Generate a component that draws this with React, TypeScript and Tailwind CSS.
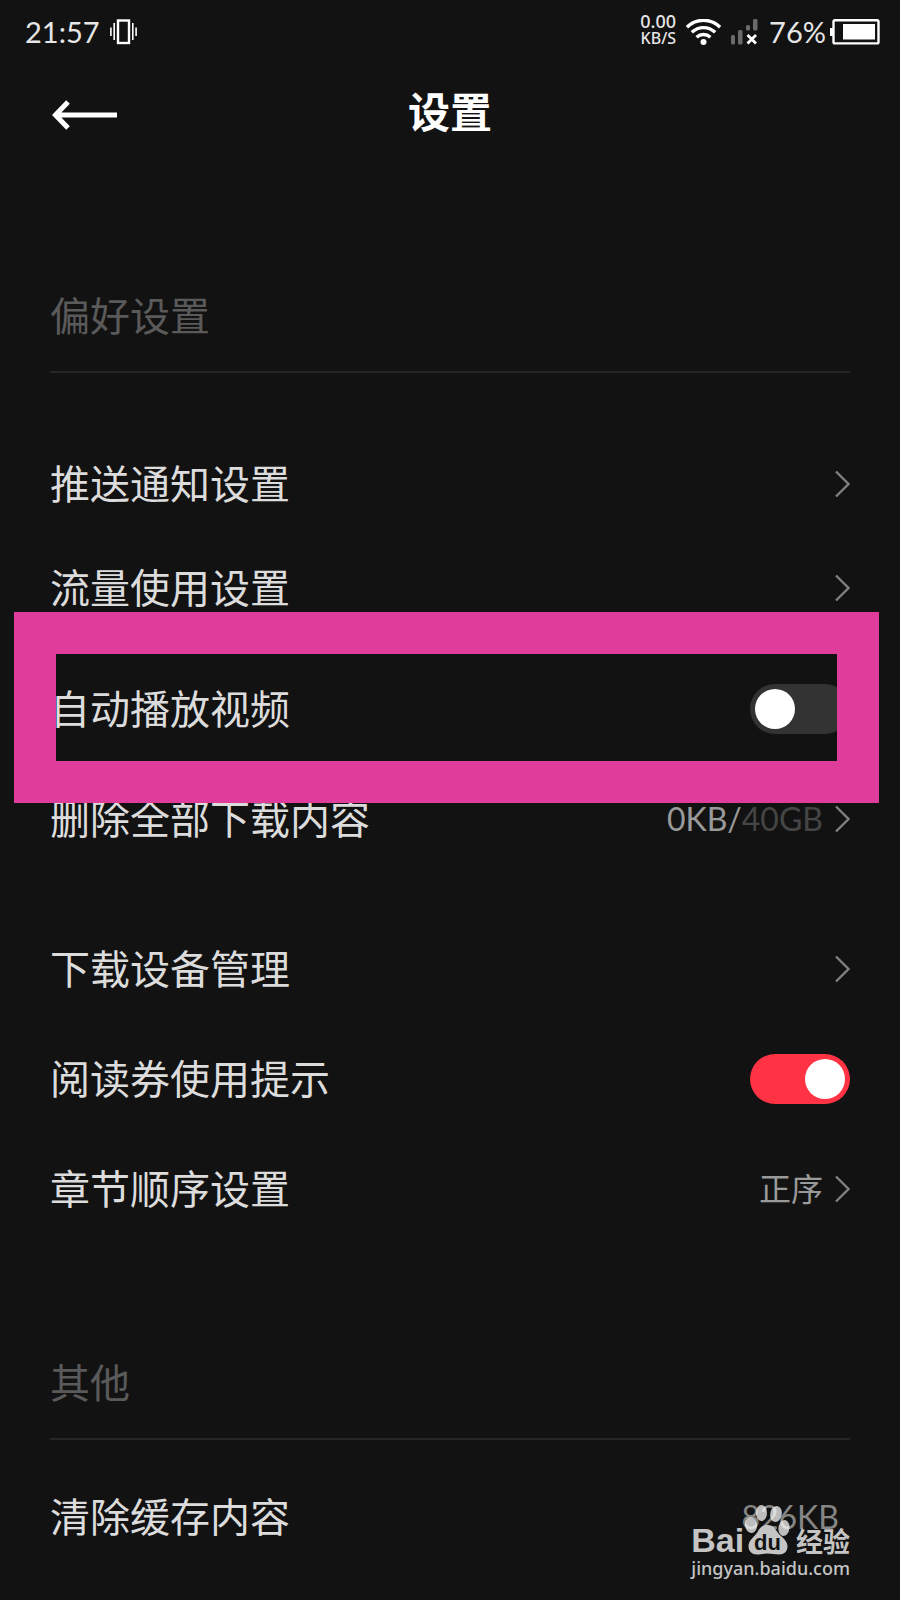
import {useState} from 'react';
import type {FC, ReactNode} from 'react';

const Chevron: FC = () => (
  <svg
    className="shrink-0"
    width="15"
    height="28"
    viewBox="0 0 15 28"
    fill="none"
    stroke="#7f7f7f"
    strokeWidth="2.4"
  >
    <path d="M1 1.5 13.5 14 1 26.5" />
  </svg>
);

const StatusBar: FC = () => (
  <div className="flex h-16 items-center justify-between pl-[25px] pr-5 text-[29px] leading-8 text-[#e6e6e6]">
    <div className="flex items-center gap-[10px]">
      <span>21:57</span>
      <svg width="27" height="26" viewBox="0 0 27 26" fill="none" stroke="#fff">
        <rect x="8" y="1.5" width="11" height="22.5" strokeWidth="2.4" />
        <path d="M4.2 4v17M22.8 4v17M.9 8.5v8.5M26.1 8.5v8.5" strokeWidth="1.6" />
      </svg>
    </div>
    <div className="flex items-center">
      <div className="mr-[10px] pb-1 text-right font-['Noto_Sans',sans-serif] text-[18px] font-medium leading-[17px]">
        <div>0.00</div>
        <div className="text-[16px]">KB/S</div>
      </div>
      <svg width="35" height="27" viewBox="0 0 35 27" fill="none" stroke="#fff" strokeWidth="3.4">
        <path d="M1 8.2C10.5-1 24.5-1 34 8.2" />
        <path d="M5.8 13.3c6.8-6.3 16.6-6.3 23.4 0" />
        <path d="M10.6 18.2c4-3.6 9.8-3.6 13.8 0" />
        <circle cx="17.5" cy="23" r="3" fill="#fff" stroke="none" />
      </svg>
      <svg className="ml-[10px]" width="28" height="26" viewBox="0 0 28 26">
        <g fill="#6a6a6a">
          <rect x="0" y="16" width="4" height="9.5" rx="1.5" />
          <rect x="7" y="11" width="4.5" height="14.5" rx="1.5" />
          <rect x="15" y="6" width="4" height="5.5" rx="1.5" />
          <rect x="22" y="0" width="4.5" height="11.5" rx="1.5" />
        </g>
        <path d="m16.5 16 8.5 8.5m0-8.5-8.5 8.5" stroke="#fff" strokeWidth="2.8" />
      </svg>
      <span className="ml-[10px]">76%</span>
      <svg className="ml-1" width="50" height="26" viewBox="0 0 50 26">
        <rect x="3.5" y="1.2" width="45" height="23.2" rx="1.5" fill="none" stroke="#fff" strokeWidth="2.4" />
        <path d="M0 9h3v8H0zM13 5h32v15.5H13z" fill="#fff" />
      </svg>
    </div>
  </div>
);

const SectionTitle: FC<{children: ReactNode}> = ({children}) => (
  <h2 className="flex h-28 items-center border-b-2 border-[#262626] text-[#5a5a5a]">{children}</h2>
);

interface LinkRowProps {
  label: string;
  value?: ReactNode;
  height?: string;
}

const LinkRow: FC<LinkRowProps> = ({label, value, height = 'h-[110px]'}) => (
  <button className={`flex w-full items-center justify-between text-left ${height}`}>
    <span>{label}</span>
    <span className="flex items-center gap-3 text-[32px] text-[#9a9a9a]">
      {value}
      <Chevron />
    </span>
  </button>
);

interface SwitchRowProps {
  label: string;
  defaultOn?: boolean;
  highlight?: boolean;
}

const SwitchRow: FC<SwitchRowProps> = ({label, defaultOn = false, highlight}) => {
  const [on, setOn] = useState(defaultOn);
  return (
    <label className="relative flex h-[110px] items-center justify-between">
      <span>{label}</span>
      <input
        type="checkbox"
        checked={on}
        onChange={() => setOn(!on)}
        className="h-[50px] w-[100px] cursor-pointer appearance-none rounded-full bg-[#333333] p-[5px] before:block before:size-10 before:rounded-full before:bg-white checked:bg-[#ff3344] checked:before:translate-x-[50px]"
      />
      {highlight && (
        <span className="pointer-events-none absolute -left-9 -right-[29px] -top-[42px] h-[191px] border-[42px] border-[#df3c9b]" />
      )}
    </label>
  );
};

const Watermark: FC = () => (
  <div className="pointer-events-none absolute bottom-5 right-[50px] text-[#c4c4c4]">
    <div className="flex items-end">
      <span className="font-['Liberation_Sans',sans-serif] text-[34px] font-bold leading-8">Bai</span>
      <svg width="46" height="52" viewBox="0 0 46 52" fill="currentColor">
        <g fill="#fff" fillOpacity="0.72">
          <ellipse cx="7" cy="21" rx="6" ry="8" transform="rotate(-8 7 21)" />
          <ellipse cx="17.5" cy="9" rx="5.5" ry="8" />
          <ellipse cx="32" cy="10" rx="5.8" ry="8" transform="rotate(12 32 10)" />
          <ellipse cx="40" cy="24" rx="5.5" ry="8" transform="rotate(8 40 24)" />
        </g>
        <path d="M23.5 21c5 0 7.5 3 9.5 6.5 3 5 10.5 8 10.5 15 0 5-3.5 8-8.500 8-4 0-7.500-1-11.500-1s-6.500 1-10.500 1c-5 0-8.500-3-8.500-8.500 0-6 6-9 9-14 2-4 5-7 10-7z" />
        <text
          x="23.5"
          y="45.5"
          textAnchor="middle"
          fill="#121212"
          className="font-['Liberation_Sans',sans-serif] text-[22px] font-bold"
        >
          du
        </text>
      </svg>
      <span className="ml-auto text-[27px] font-bold leading-7">经验</span>
    </div>
    <div className="font-['Noto_Sans',sans-serif] text-[18px] font-medium leading-6">jingyan.baidu.com</div>
  </div>
);

export default function App() {
  return (
    <div className="relative min-h-screen overflow-hidden bg-[#121212] font-[Lato,'Noto_Sans_CJK_SC',sans-serif] text-[40px] leading-none text-[#dcdcdc]">
      <StatusBar />
      <header className="grid h-24 grid-cols-[1fr_auto_1fr] items-center px-[50px]">
        <button aria-label="返回" className="w-fit pl-[2px] pt-[6px]">
          <svg width="65" height="30" viewBox="0 0 65 30" fill="none" stroke="#fff" strokeWidth="5">
            <path d="M16 2 3.5 15 16 28M3.5 15H65" />
          </svg>
        </button>
        <h1 className="text-[42px] font-bold text-white">设置</h1>
      </header>

      <main className="px-[50px] pt-[101px]">
        <section>
          <SectionTitle>偏好设置</SectionTitle>
          <div className="pt-[59px]">
            <LinkRow label="推送通知设置" height="h-[104px]" />
            <LinkRow label="流量使用设置" height="h-[104px]" />
          </div>
          <div className="mt-[14px]">
            <SwitchRow label="自动播放视频" highlight />
            <LinkRow
              label="删除全部下载内容"
              value={
                <span>
                  0KB/<span className="text-[#454545]">40GB</span>
                </span>
              }
            />
          </div>
          <div className="mt-10">
            <LinkRow label="下载设备管理" />
            <SwitchRow label="阅读券使用提示" defaultOn />
            <LinkRow label="章节顺序设置" value="正序" />
          </div>
        </section>

        <section className="mt-[84px]">
          <SectionTitle>其他</SectionTitle>
          <button className="mt-[22px] flex h-[110px] w-full items-center justify-between pr-[11px] text-left">
            <span>清除缓存内容</span>
            <span className="text-[32px] text-[#858585]">826KB</span>
          </button>
        </section>
      </main>
      <Watermark />
    </div>
  );
}
